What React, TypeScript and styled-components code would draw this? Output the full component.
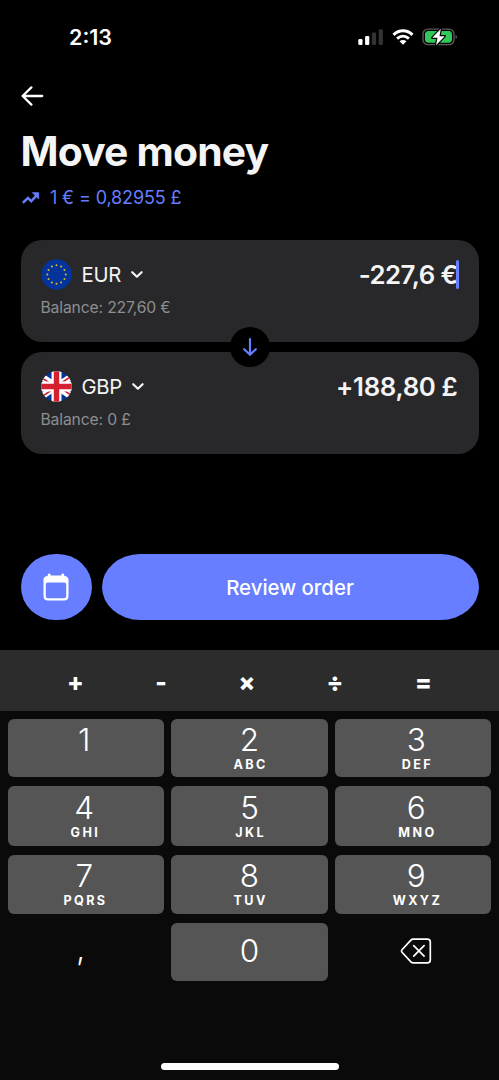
import React from "react";
import styled, { createGlobalStyle } from "styled-components";

const GlobalStyle = createGlobalStyle`
  *, *::before, *::after { box-sizing: border-box; }
  html, body { margin: 0; background: #000; }
  body { font-family: Inter, "Liberation Sans", sans-serif; color: #f4f4f4; }
  button { border: 0; padding: 0; margin: 0; background: none; color: inherit; font: inherit; }
  svg { display: block; flex: none; }
`;

const Screen = styled.main`
  width: 499px;
  height: 1080px;
  display: flex;
  flex-direction: column;
  background: #000;
  overflow: hidden;
`;

const StatusBar = styled.header`
  height: 74px;
  padding: 0 41px 0 69px;
  display: flex;
  align-items: center;
  justify-content: space-between;
`;

const Clock = styled.span`
  font-size: 21.5px;
  line-height: 26px;
  font-weight: 600;
  color: #fff;
`;

const StatusIcons = styled.div`
  display: flex;
  align-items: center;
  gap: 8px;
`;

const BackButton = styled.button`
  width: 24px;
  height: 24px;
  margin: 10px 0 0 20px;
`;

const Title = styled.h1`
  height: 50px;
  margin: 18px 0 0 20.5px;
  font-size: 40.8px;
  line-height: 50px;
  font-weight: 690;
  letter-spacing: -0.8px;
`;

const Rate = styled.div`
  height: 24px;
  margin: 10px 0 0 22px;
  display: flex;
  align-items: center;
  gap: 10px;
  font-size: 18px;
  line-height: 24px;
  letter-spacing: -0.13px;
  color: #667eff;
`;

const Accounts = styled.section`
  position: relative;
  margin: 29.5px 20.5px 0;
  display: flex;
  flex-direction: column;
  gap: 10px;
`;

const AccountCard = styled.article`
  height: 102.3px;
  padding: 19px 21px 0 20px;
  border-radius: 21px;
  background: #28282a;
`;

const AccountRow = styled.div`
  height: 31px;
  display: flex;
  align-items: center;
`;

const Currency = styled.span`
  margin: 1px 9px 0 10px;
  font-size: 20.3px;
  line-height: 30px;
  letter-spacing: -0.3px;
`;

const Amount = styled.span<{ $spacing: number }>`
  margin: 1.4px 0 0 auto;
  position: relative;
  font-size: 25.8px;
  line-height: 30px;
  font-weight: 640;
  letter-spacing: ${(p) => p.$spacing}px;
`;

const Caret = styled.i`
  position: absolute;
  right: -1px;
  top: 0;
  width: 2.6px;
  height: 29px;
  border-radius: 2px;
  background: #667eff;
`;

const Balance = styled.div`
  margin-top: 7.7px;
  font-size: 15.7px;
  line-height: 22px;
  letter-spacing: -0.15px;
  color: #8e8e90;
`;

const SwapBadge = styled.button`
  position: absolute;
  left: calc(50% + 0.5px);
  top: 50%;
  width: 40px;
  height: 40px;
  transform: translate(-50%, -50%);
  border-radius: 50%;
  background: #000;
  display: grid;
  place-items: center;
`;

const Actions = styled.div`
  margin: 100px 20.5px 0;
  height: 66px;
  display: flex;
  gap: 10px;
`;

const CalendarButton = styled.button`
  width: 71px;
  border-radius: 34px / 33px;
  background: #667eff;
  display: grid;
  place-items: center;
`;

const ReviewButton = styled.button`
  flex: 1;
  border-radius: 38px / 33px;
  background: #667eff;
  color: #fff;
  font-size: 20.4px;
  font-weight: 450;
`;

const OperatorBar = styled.div`
  margin-top: 30px;
  height: 61px;
  padding: 3px 0 0 32.5px;
  display: grid;
  grid-template-columns: 86px 85px 86.6px 89.8px 87.2px;
  align-items: center;
  background: #2c2c2c;
`;

const Operator = styled.button`
  height: 32px;
  text-align: center;
  color: #fff;
  font-size: 24.5px;
  line-height: 32px;
  font-weight: 800;
`;

const Keypad = styled.div`
  flex: 1;
  padding: 8px 7.7px 0;
  display: grid;
  grid-template-columns: repeat(3, 1fr);
  grid-template-rows: 58px 59.5px 59.5px 58px;
  gap: 9px 7.7px;
  align-content: start;
  background: #0a0a0a;
`;

const labelInsets = {
  left: "0 3px 0 0",
  center: "0",
  right: "0 0 0 6px",
};

type Column = keyof typeof labelInsets;

const Key = styled.button<{ $column: Column; $bare?: boolean; $centered?: boolean; $drop?: number }>`
  border-radius: 6px;
  background: ${(p) => (p.$bare ? "transparent" : "#555")};
  color: #fff;
  display: flex;
  flex-direction: column;
  align-items: center;
  justify-content: ${(p) => (p.$centered ? "center" : "flex-start")};
  padding: ${(p) => labelInsets[p.$column]};
  padding-top: ${(p) => (p.$centered ? 0 : 3.5 + (p.$drop ?? 0))}px;
  padding-bottom: ${(p) => (p.$centered ? 2 : 0)}px;
`;

const Digit = styled.span`
  font-size: 31.5px;
  line-height: 34px;
  font-weight: 350;
`;

const Comma = styled(Digit)`
  margin: -4px 7px 0 0;
`;

const Letters = styled.span`
  font-size: 12.6px;
  line-height: 15px;
  font-weight: 650;
  letter-spacing: 2.4px;
  margin-right: -2.4px;
`;

const HomeArea = styled.footer`
  height: 17px;
  display: flex;
  justify-content: center;
  background: #0a0a0a;
`;

const HomeIndicator = styled.div`
  width: 178px;
  height: 6.5px;
  border-radius: 4px;
  background: #fff;
`;

const Signal = () => (
  <svg width="26" height="18" viewBox="0 0 26 18">
    <rect x="0.3" y="11" width="4.2" height="6" rx="1.2" fill="#fff" />
    <rect x="7.1" y="8" width="4.2" height="9" rx="1.2" fill="#fff" />
    <rect x="13.9" y="4.6" width="4.2" height="12.4" rx="1.2" fill="#333" />
    <rect x="20.7" y="1.2" width="4.2" height="15.8" rx="1.2" fill="#333" />
  </svg>
);

const Wifi = () => (
  <svg width="22" height="18" viewBox="0 0 22 18">
    <path d="M1.5 6.8C7 1.5 15 1.5 20.5 6.8" fill="none" stroke="#fff" strokeWidth="3" />
    <path d="M5.1 10.6c3.6-3.2 8.2-3.2 11.8 0" fill="none" stroke="#fff" strokeWidth="2.8" />
    <path d="M7.5 13.2c2-1.7 5-1.7 7 0L11 16.8z" fill="#fff" />
  </svg>
);

const Battery = () => (
  <svg width="36" height="20" viewBox="0 0 36 20">
    <rect x="1" y="2.1" width="31" height="15.6" rx="5" fill="none" stroke="#5b5b5b" strokeWidth="1.3" />
    <rect x="3" y="4.1" width="27" height="11.6" rx="3.4" fill="#32c759" />
    <path d="M33.6 7.7c1.6.7 1.6 3.7 0 4.4z" fill="#777" />
    <path
      d="M18.8 1.8 10.3 10.8h5.2L14 18.2l8.7-9h-5.2z"
      fill="#fff"
      stroke="#000"
      strokeWidth="2.4"
      paintOrder="stroke"
      strokeLinejoin="round"
    />
  </svg>
);

const BackArrow = () => (
  <svg width="24" height="24" viewBox="0 0 24 24" fill="none" stroke="#fff" strokeWidth="2.3" strokeLinecap="round" strokeLinejoin="round">
    <path d="M22.2 12H2.6M11.4 3.4 2.6 12l8.8 8.6" />
  </svg>
);

const TrendIcon = () => (
  <svg width="18" height="14" viewBox="0 0 18 14">
    <path d="M1.7 11 6 7l3.2 3.2 4.4-4.7" fill="none" stroke="#667eff" strokeWidth="2.4" strokeLinecap="square" />
    <path d="M10.4 1.7h6.3v6.3z" fill="#667eff" stroke="#667eff" strokeWidth="0.8" strokeLinejoin="round" />
  </svg>
);

const Chevron = () => (
  <svg width="14" height="10" viewBox="0 0 14 10" fill="none" stroke="#f4f4f4" strokeWidth="2.2" strokeLinecap="round" strokeLinejoin="round">
    <path d="m2.2 3.2 4.7 4.5 4.7-4.5" />
  </svg>
);

const starAngles = Array.from({ length: 12 }, (_, i) => (i * Math.PI) / 6);

const EuFlag = () => (
  <svg width="31" height="31" viewBox="0 0 31 31">
    <circle cx="15.5" cy="15.5" r="15.3" fill="#043399" />
    {starAngles.map((a) => (
      <circle key={a} cx={15.5 + 9.2 * Math.sin(a)} cy={15.5 - 9.2 * Math.cos(a)} r="1" fill="#d9bd2e" />
    ))}
  </svg>
);

const UkFlag = () => (
  <svg width="31" height="31" viewBox="0 0 31 31">
    <defs>
      <clipPath id="uk-round">
        <circle cx="15.5" cy="15.5" r="15.3" />
      </clipPath>
    </defs>
    <g clipPath="url(#uk-round)">
      <path d="M0 0h31v31H0z" fill="#043399" />
      <path d="M-3 3 34 28M34 3-3 28" stroke="#fff" strokeWidth="6.4" />
      <path d="M-1 5.6 15.5 16.7M32 25.4 15.5 14.3M32 4 15.5 15.2M-1 27 15.5 15.8" stroke="#d5202f" strokeWidth="1.7" />
      <path d="M15.5 0v31M0 15.5h31" stroke="#fff" strokeWidth="10" />
      <path d="M15.5 0v31M0 15.5h31" stroke="#d5202f" strokeWidth="5.4" />
    </g>
  </svg>
);

const DownArrow = () => (
  <svg width="20" height="20" viewBox="0 0 20 20" fill="none" stroke="#667eff" strokeWidth="2.2" strokeLinecap="round" strokeLinejoin="round">
    <path d="M10 2.2v15.4M4.2 12.2l5.8 5.6 5.8-5.6" />
  </svg>
);

const CalendarIcon = () => (
  <svg width="28" height="30" viewBox="0 0 28 30">
    <path
      fillRule="evenodd"
      fill="#fff"
      d="M7.2 1.5c.8 0 1.4.6 1.4 1.4v.7h10.8v-.7a1.4 1.4 0 0 1 2.8 0v.8c2.4.3 4.3 1.6 4.3 4.2v16.4c0 2.8-1.5 4.2-4.3 4.2H5.8c-2.8 0-4.3-1.4-4.3-4.2V7.9c0-2.6 1.9-3.9 4.3-4.2v-.8c0-.8.6-1.400 1.4-1.400zM6 10.500c-1.500 0-2.200.7-2.200 2.100v11.500c0 1.500.7 2.200 2.200 2.200h16c1.500 0 2.200-.7 2.200-2.200V12.600c0-1.400-.7-2.100-2.200-2.100z"
    />
  </svg>
);

const DeleteIcon = () => (
  <svg width="32" height="28" viewBox="0 0 32 28" fill="none" stroke="#fff" strokeWidth="1.7" strokeLinecap="round" strokeLinejoin="round">
    <path d="M13.3 2.2h14c1.9 0 3 1 3 2.9v17.8c0 1.9-1.1 2.9-3 2.9h-14c-1 0-1.7-.3-2.4-1L2.2 15.5c-.9-.9-.9-2.1 0-3l8.7-9.3c.7-.7 1.4-1 2.4-1z" />
    <path d="m13.7 8.7 10.4 10.5M24.1 8.7 13.7 19.2" />
  </svg>
);

const operators = ["+", "-", "×", "÷", "="];

const columns: Column[] = ["left", "center", "right"];

const keys: [string, string][] = [
  ["1", ""],
  ["2", "ABC"],
  ["3", "DEF"],
  ["4", "GHI"],
  ["5", "JKL"],
  ["6", "MNO"],
  ["7", "PQRS"],
  ["8", "TUV"],
  ["9", "WXYZ"],
];

export default function App() {
  return (
    <Screen>
      <GlobalStyle />
      <StatusBar>
        <Clock>2:13</Clock>
        <StatusIcons>
          <Signal />
          <Wifi />
          <Battery />
        </StatusIcons>
      </StatusBar>

      <BackButton aria-label="Back">
        <BackArrow />
      </BackButton>
      <Title>Move money</Title>
      <Rate>
        <TrendIcon />
        <span>1 € = 0,82955 £</span>
      </Rate>

      <Accounts>
        <AccountCard>
          <AccountRow>
            <EuFlag />
            <Currency>EUR</Currency>
            <Chevron />
            <Amount $spacing={-0.55}>
              -227,6 €<Caret />
            </Amount>
          </AccountRow>
          <Balance>Balance: 227,60 €</Balance>
        </AccountCard>
        <AccountCard>
          <AccountRow>
            <UkFlag />
            <Currency>GBP</Currency>
            <Chevron />
            <Amount $spacing={-0.35}>+188,80 £</Amount>
          </AccountRow>
          <Balance>Balance: 0 £</Balance>
        </AccountCard>
        <SwapBadge aria-label="Swap">
          <DownArrow />
        </SwapBadge>
      </Accounts>

      <Actions>
        <CalendarButton aria-label="Schedule">
          <CalendarIcon />
        </CalendarButton>
        <ReviewButton>Review order</ReviewButton>
      </Actions>

      <OperatorBar>
        {operators.map((op) => (
          <Operator key={op}>{op}</Operator>
        ))}
      </OperatorBar>

      <Keypad>
        {keys.map(([digit, letters], i) => (
          <Key key={digit} $column={columns[i % 3]} $drop={i < 3 ? 0 : 1}>
            <Digit>{digit}</Digit>
            {letters && <Letters>{letters}</Letters>}
          </Key>
        ))}
        <Key $column="left" $bare $centered>
          <Comma>,</Comma>
        </Key>
        <Key $column="center" $centered>
          <Digit>0</Digit>
        </Key>
        <Key $column="right" $bare $centered aria-label="Delete">
          <DeleteIcon />
        </Key>
      </Keypad>
      <HomeArea>
        <HomeIndicator />
      </HomeArea>
    </Screen>
  );
}
